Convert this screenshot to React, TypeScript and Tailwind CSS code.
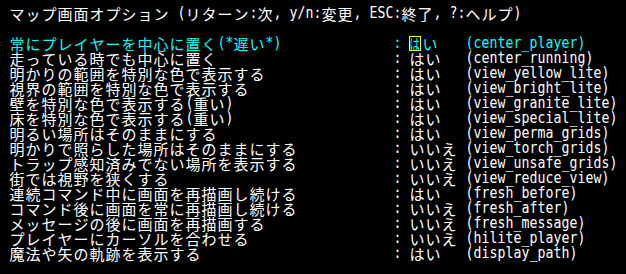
import React from "react";

type Row = { label: string; yes: boolean; name: string };

const rows: Row[] = [
  { label: "常にプレイヤーを中心に置く(*遅い*)", yes: true, name: "center_player" },
  { label: "走っている時でも中心に置く", yes: true, name: "center_running" },
  { label: "明かりの範囲を特別な色で表示する", yes: true, name: "view_yellow_lite" },
  { label: "視界の範囲を特別な色で表示する", yes: true, name: "view_bright_lite" },
  { label: "壁を特別な色で表示する(重い)", yes: true, name: "view_granite_lite" },
  { label: "床を特別な色で表示する(重い)", yes: true, name: "view_special_lite" },
  { label: "明るい場所はそのままにする", yes: true, name: "view_perma_grids" },
  { label: "明かりで照らした場所はそのままにする", yes: false, name: "view_torch_grids" },
  { label: "トラップ感知済みでない場所を表示する", yes: false, name: "view_unsafe_grids" },
  { label: "街では視野を狭くする", yes: false, name: "view_reduce_view" },
  { label: "連続コマンド中に画面を再描画し続ける", yes: true, name: "fresh_before" },
  { label: "コマンド後に画面を常に再描画し続ける", yes: false, name: "fresh_after" },
  { label: "メッセージの後に画面を再描画する", yes: false, name: "fresh_message" },
  { label: "プレイヤーにカーソルを合わせる", yes: false, name: "hilite_player" },
  { label: "魔法や矢の軌跡を表示する", yes: true, name: "display_path" },
];

const isWide = (ch: string) => (ch.codePointAt(0) ?? 0) > 0xff;

function Ch({ ch }: { ch: string }) {
  if (isWide(ch)) {
    return (
      <span className="w-[16px] h-[15px] shrink-0 text-center font-['Noto_Sans_CJK_JP',sans-serif] text-[15px] leading-[15px]">
        {ch}
      </span>
    );
  }
  return (
    <span className="w-[8px] h-[15px] shrink-0 text-center font-['DejaVu_Sans_Mono',monospace] text-[15px] leading-[15px] scale-x-[0.88]">
      {ch === " " ? "\u00a0" : ch}
    </span>
  );
}

function Text({ text }: { text: string }) {
  return (
    <>
      {Array.from(text).map((ch, i) => (
        <Ch key={i} ch={ch} />
      ))}
    </>
  );
}

export default function App() {
  return (
    <div className="w-[626px] h-[274px] bg-black text-white pl-[9px] pt-[6px] overflow-hidden">
      <div className="flex h-[15px]">
        <Text text="マップ画面オプション (リターン:次, y/n:変更, ESC:終了, ?:ヘルプ)" />
      </div>
      <div className="h-[15px]" />
      {rows.map((r, idx) => {
        const first = idx === 0;
        return (
          <div
            key={r.name}
            className={
              "flex h-[15px] " + (first ? "text-[#00ffff]" : "text-white")
            }
          >
            <div className="flex w-[384px] shrink-0">
              <Text text={r.label} />
            </div>
            <Text text=": " />
            <div className="flex w-[48px] shrink-0">
              {first ? (
                <>
                  <span className="relative flex w-[13px] shrink-0">
                    <span className="w-[16px] h-[15px] shrink-0 text-center font-['Noto_Sans_CJK_JP',sans-serif] text-[15px] leading-[15px] origin-left scale-x-[0.72]">
                      は
                    </span>
                    <span className="absolute left-0 top-0 w-[12px] h-[15px] border border-[#ffff00]" />
                  </span>
                  <Ch ch="い" />
                </>
              ) : (
                <Text text={r.yes ? "はい" : "いいえ"} />
              )}
            </div>
            <Text text={" (" + r.name + ")"} />
          </div>
        );
      })}
    </div>
  );
}
